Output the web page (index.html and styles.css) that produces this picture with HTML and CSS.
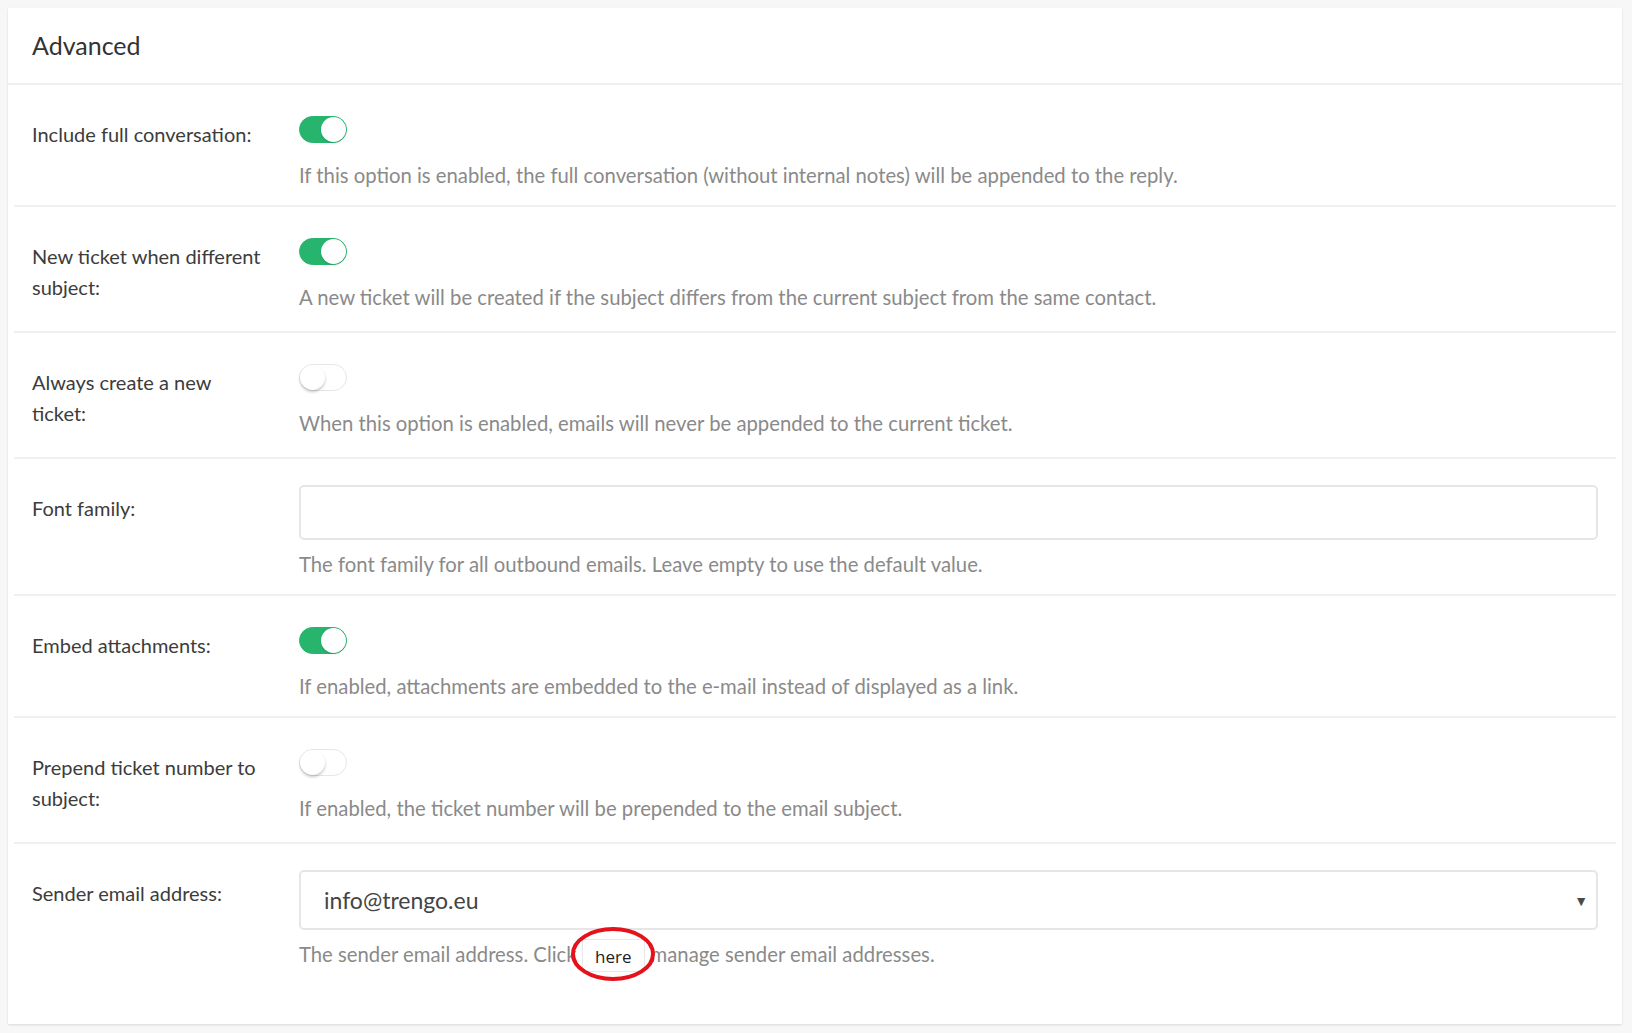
FILE: index.html
```html
<!DOCTYPE html>
<html>
<head>
<meta charset="utf-8">
<link rel="stylesheet" href="styles.css">
</head>
<body>
<div class="card">
  <div class="card-header">Advanced</div>

  <div class="row">
    <div class="label">Include full conversation:</div>
    <div class="field">
      <span class="toggle on"><span class="knob"></span></span>
      <div class="desc">If this option is enabled, the full conversation (without internal notes) will be appended to the reply.</div>
    </div>
  </div>

  <div class="row">
    <div class="label">New ticket when different subject:</div>
    <div class="field">
      <span class="toggle on"><span class="knob"></span></span>
      <div class="desc">A new ticket will be created if the subject differs from the current subject from the same contact.</div>
    </div>
  </div>

  <div class="row">
    <div class="label">Always create a new ticket:</div>
    <div class="field">
      <span class="toggle"><span class="knob"></span></span>
      <div class="desc">When this option is enabled, emails will never be appended to the current ticket.</div>
    </div>
  </div>

  <div class="row">
    <div class="label">Font family:</div>
    <div class="field">
      <div class="input"></div>
      <div class="desc">The font family for all outbound emails. Leave empty to use the default value.</div>
    </div>
  </div>

  <div class="row">
    <div class="label">Embed attachments:</div>
    <div class="field">
      <span class="toggle on"><span class="knob"></span></span>
      <div class="desc">If enabled, attachments are embedded to the e-mail instead of displayed as a link.</div>
    </div>
  </div>

  <div class="row">
    <div class="label">Prepend ticket number to subject:</div>
    <div class="field">
      <span class="toggle"><span class="knob"></span></span>
      <div class="desc">If enabled, the ticket number will be prepended to the email subject.</div>
    </div>
  </div>

  <div class="row last">
    <div class="label">Sender email address:</div>
    <div class="field">
      <div class="input select"><span>info@trengo.eu</span><span class="caret">&#9660;</span></div>
      <div class="desc">The sender email address. Click <span class="here">here<span class="here-box">here</span><svg class="ring" width="86" height="56" viewBox="0 0 86 56"><ellipse cx="43" cy="28" rx="40" ry="25" fill="none" stroke="#e3121b" stroke-width="4"/></svg></span> to manage sender email addresses.</div>
    </div>
  </div>
</div>
</body>
</html>
```

FILE: styles.css
```css
html, body {
  margin: 0;
  padding: 0;
}
body {
  background: #f7f7f7;
  font-family: Lato, "Open Sans", sans-serif;
  color: #3a3a3a;
  padding: 8px 10px 10px 8px;
}
.card {
  background: #fff;
  box-shadow: 0 1px 2px rgba(0,0,0,0.12);
  padding-bottom: 40px;
}
.card-header {
  height: 75px;
  line-height: 74px;
  padding: 0 24px;
  font-size: 25px;
  color: #333;
  border-bottom: 2px solid #f0f0f0;
}
.row {
  display: grid;
  grid-template-columns: 235px 1fr;
  column-gap: 32px;
  margin: 0 6px;
  padding: 26px 18px 17px;
  border-bottom: 2px solid #f0f0f0;
}
.row.last {
  border-bottom: none;
}
.label {
  font-size: 20px;
  line-height: 31px;
  padding: 8px 0 11px;
  color: #3c3c3c;
}
.field {
  display: flex;
  flex-direction: column;
  align-items: flex-start;
}
.toggle {
  display: block;
  position: relative;
  width: 48px;
  height: 27px;
  margin-top: 5px;
  margin-bottom: 19px;
  border-radius: 14px;
  box-sizing: border-box;
  background: #fff;
  border: 1px solid #e6e6e6;
}
.toggle .knob {
  position: absolute;
  top: 0;
  left: 0;
  width: 25px;
  height: 25px;
  border-radius: 50%;
  background: #fff;
  box-shadow: 0 2px 3px rgba(0,0,0,0.22);
}
.toggle.on {
  background: #27b56e;
  border-color: #27b56e;
}
.toggle.on .knob {
  left: 21px;
  box-shadow: 0 1px 2px rgba(0,0,0,0.15);
}
.desc {
  font-size: 20.3px;
  line-height: 26px;
  color: #8a8a8a;
}
.input {
  align-self: stretch;
  height: 55px;
  box-sizing: border-box;
  border: 2px solid #e6e6e6;
  border-radius: 5px;
  margin-bottom: 11px;
}
.select {
  height: 60px;
  display: flex;
  align-items: center;
  justify-content: space-between;
  padding: 0 8px 0 23px;
  font-size: 23px;
  color: #444;
  margin-bottom: 11px;
}
.caret {
  font-size: 14px;
  color: #4a4a4a;
}
.here {
  position: relative;
}
.here-box {
  position: absolute;
  left: 0;
  top: -3px;
  width: 63px;
  height: 33px;
  box-sizing: border-box;
  background: #fff;
  border: 1px solid #e8e8e8;
  color: #222;
  font-size: 17px;
  line-height: 33px;
  text-align: center;
  font-family: "Open Sans", sans-serif;
}
.ring {
  position: absolute;
  left: -12px;
  top: -16px;
}
```
